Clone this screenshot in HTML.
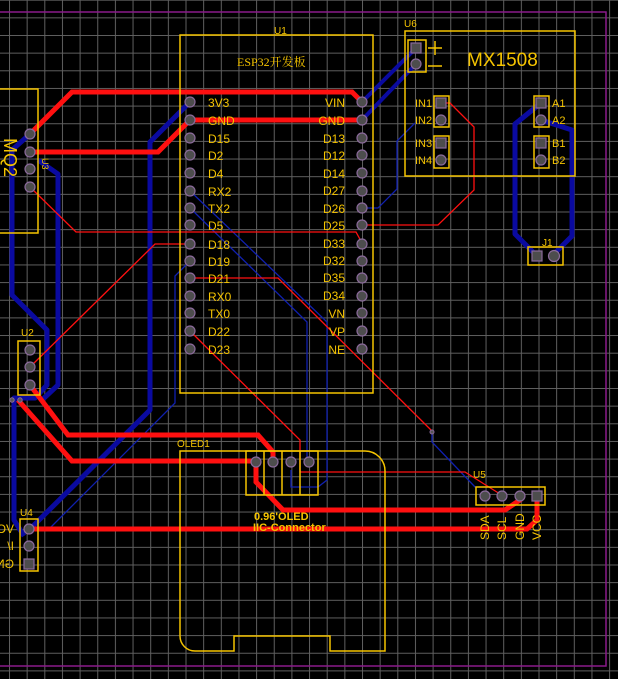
<!DOCTYPE html>
<html><head><meta charset="utf-8"><style>
html,body{margin:0;padding:0;background:#000;}
svg{display:block;}
text{font-family:"Liberation Sans",sans-serif;fill:#f5c400;}
</style></head><body>
<svg width="618" height="679" viewBox="0 0 618 679" xmlns="http://www.w3.org/2000/svg">
<defs>
<pattern id="g" x="9" y="-0.3" width="17.65" height="17.65" patternUnits="userSpaceOnUse">
<path d="M0.5 0V17.65M0 0.5H17.65" stroke="#606060" stroke-width="1" fill="none"/>
</pattern>
</defs>
<rect width="618" height="679" fill="#000"/>
<rect width="618" height="679" fill="url(#g)"/>
<path d="M0 12H606V666H0" fill="none" stroke="#8a1a8a" stroke-width="1.5"/>

<g fill="none" stroke="#0a0aa0" stroke-width="5" stroke-linejoin="round">
<path d="M30 134L12 150V295L47 330V385L35 398H14V520L24 536"/>
<path d="M38 160L58 174V385L42 400"/>
<path d="M190 102L150 142V410L30 529"/>
<path d="M541 103L515 124V234L533 252"/>
<path d="M541 120L572 130V236L556 252"/>
<path d="M362 102L416 48" stroke-width="4"/>
<path d="M362 120L416 64" stroke-width="4"/>
</g>
<g fill="none" stroke="#1020b0" stroke-width="1.3">
<path d="M190 261L175 276V403L50 528"/>
<path d="M190 191L327 322V480L318 487H291V470"/>
<path d="M190 208L307 322V462"/>
<path d="M362 208L378 208L397 189V141L415 123"/>
<path d="M432 432V442L476 488"/>
</g>
<g fill="none" stroke="#ff1010" stroke-width="5" stroke-linejoin="miter">
<path d="M30 134L72 92H352L362 102"/>
<path d="M30 152H158L190 120H362"/>
<path d="M30 385L68 435H258L273 452V462"/>
<path d="M18 400L72 461H256"/>
<path d="M256 462V482L283 510H505L520 500V496"/>
<path d="M30 529H527L537 520V496"/>
</g>
<g fill="none" stroke="#ff1010" stroke-width="1.3">
<path d="M30 187L76 232H356L362 243"/>
<path d="M362 225H438L474 190V127L450 103H441"/>
<path d="M190 244H155L30 367"/>
<path d="M190 278H278L432 431"/>
<path d="M190 331L300 440V472H305H465L500 494"/>
</g>
<circle cx="432" cy="432" r="2" fill="#555" stroke="#8a6a9a"/>
<circle cx="12" cy="400" r="2.2" fill="#555" stroke="#8a6a9a"/>
<circle cx="20" cy="400" r="2.2" fill="#555" stroke="#8a6a9a"/>

<g fill="none" stroke="#f5c400" stroke-width="1.5">
<rect x="180" y="35" width="193" height="358"/>
<rect x="-5" y="89" width="43" height="144"/>
<rect x="405" y="31" width="170" height="145"/>
<rect x="408" y="40" width="18" height="32"/>
<rect x="434" y="96" width="15" height="31"/>
<rect x="434" y="136" width="15" height="32"/>
<rect x="534" y="96" width="15" height="31"/>
<rect x="534" y="136" width="15" height="32"/>
<rect x="528" y="247" width="35" height="18"/>
<rect x="18" y="341" width="22" height="54"/>
<rect x="20" y="519" width="18" height="52"/>
<rect x="476" y="487" width="69" height="18"/>
<path d="M180 451H365A20 20 0 0 1 385 471V651H330V636H234V651H195A15 15 0 0 1 180 636Z"/>
<rect x="246" y="451" width="72" height="44"/>
<path d="M264 451V495M282 451V495M300 451V495"/>
<path d="M428 48h14M435 41v14M428 66h14"/>
</g>

<g fill="#4d4d4d" stroke="#8a6a9a" stroke-width="1.2">
<g id="lp">
<circle cx="190" cy="102" r="5"/><circle cx="190" cy="120" r="5"/><circle cx="190" cy="138" r="5"/><circle cx="190" cy="155" r="5"/><circle cx="190" cy="173" r="5"/><circle cx="190" cy="191" r="5"/><circle cx="190" cy="208" r="5"/><circle cx="190" cy="225" r="5"/><circle cx="190" cy="244" r="5"/><circle cx="190" cy="261" r="5"/><circle cx="190" cy="278" r="5"/><circle cx="190" cy="296" r="5"/><circle cx="190" cy="313" r="5"/><circle cx="190" cy="331" r="5"/><circle cx="190" cy="349" r="5"/>
</g>
<use href="#lp" x="172"/>
<circle cx="30" cy="134" r="5"/><circle cx="30" cy="152" r="5"/><circle cx="30" cy="169" r="5"/><circle cx="30" cy="187" r="5"/>
<rect x="411" y="43" width="10" height="10"/><circle cx="416" cy="64" r="5"/>
<rect x="436" y="98" width="10" height="10"/><circle cx="441" cy="120" r="5"/>
<rect x="436" y="138" width="10" height="10"/><circle cx="441" cy="160" r="5"/>
<rect x="536" y="98" width="10" height="10"/><circle cx="541" cy="120" r="5"/>
<rect x="536" y="138" width="10" height="10"/><circle cx="541" cy="160" r="5"/>
<rect x="532" y="251" width="10" height="10"/><circle cx="554" cy="256" r="5.5"/>
<circle cx="30" cy="350" r="5"/><circle cx="30" cy="367" r="5"/><circle cx="30" cy="385" r="5"/>
<circle cx="29" cy="529" r="5"/><circle cx="29" cy="546" r="5"/><rect x="24" y="559" width="10" height="10"/>
<circle cx="256" cy="462" r="5"/><circle cx="273" cy="462" r="5"/><circle cx="291" cy="462" r="5"/><circle cx="309" cy="462" r="5"/>
<circle cx="485" cy="496" r="5"/><circle cx="502" cy="496" r="5"/><circle cx="520" cy="496" r="5"/><rect x="532" y="491" width="10" height="10"/>
</g>

<g font-size="12">
<text x="208" y="107">3V3</text><text x="208" y="125">GND</text><text x="208" y="143">D15</text><text x="208" y="160">D2</text><text x="208" y="178">D4</text><text x="208" y="196">RX2</text><text x="208" y="213">TX2</text><text x="208" y="230">D5</text><text x="208" y="249">D18</text><text x="208" y="266">D19</text><text x="208" y="283">D21</text><text x="208" y="301">RX0</text><text x="208" y="318">TX0</text><text x="208" y="336">D22</text><text x="208" y="354">D23</text>
</g>
<g font-size="12" text-anchor="end">
<text x="345" y="107">VIN</text><text x="345" y="125">GND</text><text x="345" y="143">D13</text><text x="345" y="160">D12</text><text x="345" y="178">D14</text><text x="345" y="195">D27</text><text x="345" y="213">D26</text><text x="345" y="230">D25</text><text x="345" y="248">D33</text><text x="345" y="265">D32</text><text x="345" y="282">D35</text><text x="345" y="300">D34</text><text x="345" y="318">VN</text><text x="345" y="336">VP</text><text x="345" y="354">NE</text>
</g>
<text x="274" y="34" font-size="10">U1</text>
<text x="237" y="66" font-size="12" style="font-family:'Liberation Serif','Noto Serif CJK SC',serif">ESP32开发板</text>
<text x="404" y="27" font-size="10">U6</text>
<text x="467" y="66" font-size="19">MX1508</text>
<g font-size="11">
<text x="415" y="107">IN1</text><text x="415" y="124">IN2</text><text x="415" y="147">IN3</text><text x="415" y="164">IN4</text>
<text x="552" y="107">A1</text><text x="552" y="124">A2</text><text x="552" y="147">B1</text><text x="552" y="164">B2</text>
</g>
<text x="542" y="246" font-size="10">J1</text>
<text x="21" y="336" font-size="10">U2</text>
<text x="20" y="516" font-size="10">U4</text>
<text x="473" y="478" font-size="10">U5</text>
<text x="177" y="447" font-size="10">OLED1</text>
<text x="254" y="520" font-size="11" font-weight="bold">0.96'OLED</text>
<text x="253" y="531" font-size="11" font-weight="bold">IIC-Connector</text>
<text transform="translate(4,138) rotate(90)" font-size="18">MQ2</text>
<text transform="translate(42,158) rotate(90)" font-size="9">U3</text>
<g font-size="12">
<text transform="translate(489,540) rotate(-90)">SDA</text>
<text transform="translate(506,540) rotate(-90)">SCL</text>
<text transform="translate(524,540) rotate(-90)">GND</text>
<text transform="translate(541,540) rotate(-90)">VCC</text>
</g>
<g font-size="12" transform="translate(14,0) scale(-1,1)">
<text x="0" y="533">VO</text><text x="0" y="550">I/</text><text x="0" y="568">GN</text>
</g>
</svg>
</body></html>
